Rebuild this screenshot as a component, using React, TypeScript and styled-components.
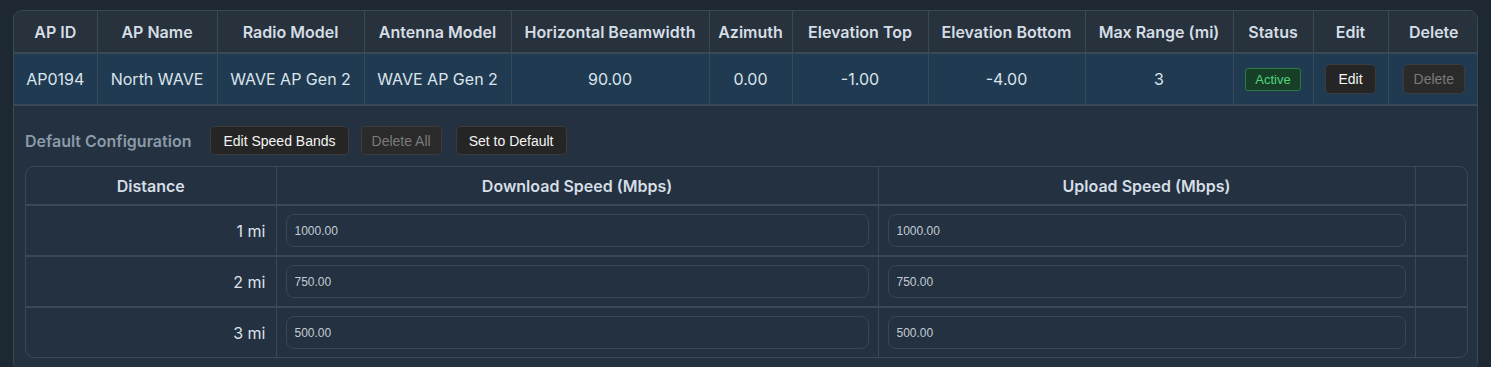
import React from 'react'
import styled, { createGlobalStyle } from 'styled-components'

const GlobalStyle = createGlobalStyle`
  html, body {
    margin: 0;
    background: #1d2832;
  }
  body {
    font-family: Inter, "Noto Sans", sans-serif;
  }
`

const columns = [
  { title: 'AP ID', width: 83 },
  { title: 'AP Name', width: 120 },
  { title: 'Radio Model', width: 147 },
  { title: 'Antenna Model', width: 147 },
  { title: 'Horizontal Beamwidth', width: 198 },
  { title: 'Azimuth', width: 83 },
  { title: 'Elevation Top', width: 136 },
  { title: 'Elevation Bottom', width: 157 },
  { title: 'Max Range (mi)', width: 148 },
  { title: 'Status', width: 80 },
  { title: 'Edit', width: 75 },
  { title: 'Delete', width: 91 },
]

const row = ['AP0194', 'North WAVE', 'WAVE AP Gen 2', 'WAVE AP Gen 2', '90.00', '0.00', '-1.00', '-4.00', '3']

const bands = [
  { distance: '1 mi', down: '1000.00', up: '1000.00' },
  { distance: '2 mi', down: '750.00', up: '750.00' },
  { distance: '3 mi', down: '500.00', up: '500.00' },
]

const App = () => {
  return (
    <Page>
      <GlobalStyle />
      <TableWrap>
        <Table>
          <colgroup>
            {columns.map((c) => (
              <col key={c.title} style={{ width: c.width }} />
            ))}
          </colgroup>
          <thead>
            <tr>
              {columns.map((c) => (
                <Th key={c.title}>{c.title}</Th>
              ))}
            </tr>
          </thead>
          <tbody>
            <DataRow>
              {row.map((v, i) => (
                <Td key={i}>{v}</Td>
              ))}
              <Td><Badge>Active</Badge></Td>
              <Td><Btn $small>Edit</Btn></Td>
              <Td><Btn $small disabled>Delete</Btn></Td>
            </DataRow>
            <tr>
              <ExpandCell colSpan={12}>
                <Toolbar>
                  <SectionTitle>Default Configuration</SectionTitle>
                  <Btn>Edit Speed Bands</Btn>
                  <Btn disabled>Delete All</Btn>
                  <Btn>Set to Default</Btn>
                </Toolbar>
                <InnerWrap>
                  <InnerTable>
                    <colgroup>
                      <col style={{ width: 250 }} />
                      <col style={{ width: 602 }} />
                      <col style={{ width: 537 }} />
                      <col style={{ width: 52 }} />
                    </colgroup>
                    <thead>
                      <tr>
                        <InnerTh>Distance</InnerTh>
                        <InnerTh>Download Speed (Mbps)</InnerTh>
                        <InnerTh>Upload Speed (Mbps)</InnerTh>
                        <InnerTh />
                      </tr>
                    </thead>
                    <tbody>
                      {bands.map((b, i) => {
                        const last = i === bands.length - 1
                        return (
                          <tr key={b.distance}>
                            <DistCell $last={last}>{b.distance}</DistCell>
                            <InputCell $last={last}><SpeedInput defaultValue={b.down} /></InputCell>
                            <InputCell $last={last}><SpeedInput defaultValue={b.up} /></InputCell>
                            <InputCell $last={last} />
                          </tr>
                        )
                      })}
                    </tbody>
                  </InnerTable>
                </InnerWrap>
              </ExpandCell>
            </tr>
          </tbody>
        </Table>
      </TableWrap>
    </Page>
  )
}

const Page = styled.div`
  padding: 10px 13px 0;
  height: 367px;
  box-sizing: border-box;
  overflow: hidden;
`

const TableWrap = styled.div`
  border: 1px solid #3a4957;
  border-radius: 9px;
  overflow: hidden;
  background: #26323e;
`

const Table = styled.table`
  width: 100%;
  table-layout: fixed;
  border-collapse: collapse;
`

const Th = styled.th`
  height: 41px;
  padding: 0 4px;
  font-size: 16px;
  font-weight: 600;
  color: #d5dde5;
  background: #27323d;
  border-right: 1px solid #3a4957;
  border-bottom: 2px solid #3a4957;
  white-space: nowrap;
  &:last-child { border-right: none; }
`

const DataRow = styled.tr`
  background: #1f3a51;
`

const Td = styled.td`
  height: 50px;
  padding: 0 6px;
  text-align: center;
  font-size: 16px;
  color: #dbe4ec;
  border-right: 1px solid #3a4957;
  border-bottom: 2px solid #3a4957;
  white-space: nowrap;
  &:last-child { border-right: none; }
`

const Badge = styled.span`
  display: inline-block;
  padding: 3px 9px;
  font-family: "Liberation Sans", Arial, sans-serif;
  font-size: 13px;
  color: #4fd47a;
  background: #173f27;
  border: 1px solid #2c7a44;
  border-radius: 3px;
`

const Btn = styled.button<{ $small?: boolean }>`
  height: ${(p) => (p.$small ? '30px' : '29px')};
  padding: 0 12px;
  font-family: "Liberation Sans", Arial, sans-serif;
  font-size: 14px;
  color: #f4f4f4;
  background: #252525;
  border: 1px solid #3c3c3c;
  border-radius: 5px;
  &:disabled {
    color: #7a7a7a;
    background: #2a2a2a;
    padding: 0 10px;
  }
`

const ExpandCell = styled.td`
  background: #243140;
  padding: 20px 11px 12px;
`

const Toolbar = styled.div`
  display: flex;
  align-items: center;
  gap: 12px;
  margin-bottom: 11px;
  & > button:last-child { margin-left: 2px; }
`

const SectionTitle = styled.span`
  font-size: 16px;
  font-weight: 600;
  color: #8b9aa8;
  margin-right: 7px;
`

const InnerWrap = styled.div`
  border: 1px solid #3a4957;
  border-radius: 9px;
  overflow: hidden;
`

const InnerTable = styled.table`
  width: 100%;
  table-layout: fixed;
  border-collapse: collapse;
`

const InnerTh = styled.th`
  height: 35px;
  font-size: 16px;
  font-weight: 600;
  color: #d5dde5;
  border-right: 1px solid #3a4957;
  border-bottom: 2px solid #3a4957;
  &:last-child { border-right: none; }
`

const DistCell = styled.td<{ $last?: boolean }>`
  height: 49px;
  padding: 0 10px;
  text-align: right;
  font-size: 16px;
  color: #dbe4ec;
  border-right: 1px solid #3a4957;
  border-bottom: ${(p) => (p.$last ? 'none' : '2px solid #3a4957')};
`

const InputCell = styled.td<{ $last?: boolean }>`
  padding: 0 9px;
  border-right: 1px solid #3a4957;
  border-bottom: ${(p) => (p.$last ? 'none' : '2px solid #3a4957')};
  &:last-child { border-right: none; }
`

const SpeedInput = styled.input`
  display: block;
  width: 100%;
  box-sizing: border-box;
  height: 33px;
  padding: 0 8px;
  font-family: "Liberation Sans", Arial, sans-serif;
  font-size: 12px;
  color: #c3ccd4;
  background: #243140;
  border: 1px solid #3a4654;
  border-radius: 8px;
  outline: none;
`

export default App
